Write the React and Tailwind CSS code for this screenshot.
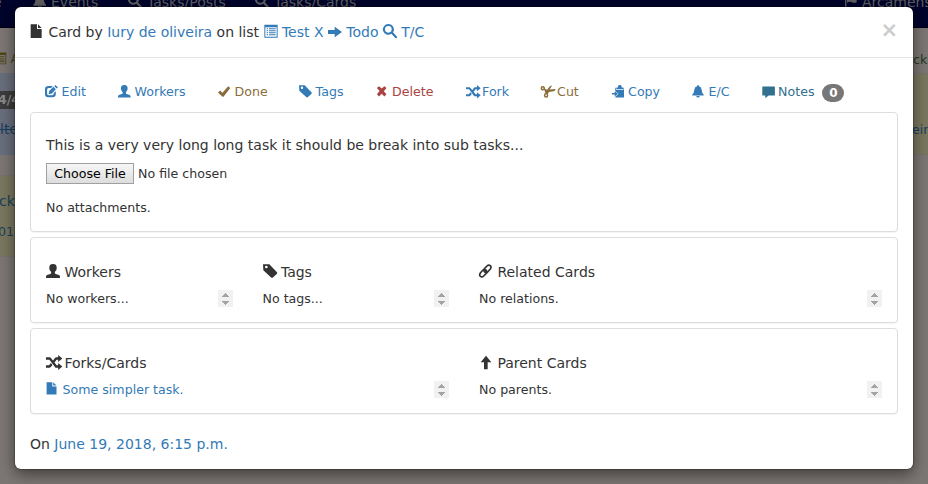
import React from "react";

// Solid glyphs on a 42-unit grid; each one scales with the text beside it.
const GLYPHS = {
  file: <path d="M2 1h19v14h14v27H2zM24 1l11 11H24z" />,
  list: (
    <path
      fillRule="evenodd"
      d="M1 2h40v39H1zM4 10v28h34V10zM8 13h4v3H8zm7 0h20v3H15zM8 19h4v3H8zm7 0h20v3H15zM8 25h4v3H8zm7 0h20v3H15zM8 31h4v3H8zm7 0h20v3H15z"
    />
  ),
  right: <path d="M0 18h20V8l22 16-22 16V30H0z" />,
  up: <path d="M15 43V22H5L21 2l16 20H26v21z" />,
  search: (
    <path
      fillRule="evenodd"
      d="M16 0a16 16 0 1 0 9 29l12 13q2 2 4 0t1-4L30 25A16 16 0 0 0 16 0m0 6a10 10 0 1 1 0 20 10 10 0 0 1 0-20"
    />
  ),
  edit: (
    <>
      <path d="M26 3H12Q0 3 0 14v16q0 11 11 11h14q11 0 11-11v-9l-7 6v2q0 5-5 5H12q-5 0-5-5V15q0-5 5-5h8z" />
      <path d="M12 31l2-11L28 6l8 8-13 14zM31 4l4-4 8 8-4 4z" />
    </>
  ),
  user: (
    <path d="M21 0c-8 0-12 5-11 12 0 4 1 8 5 11 1 3 1 5-2 7L3 33q-3 2-3 5v4h42v-4q0-3-3-5l-10-3c-3-2-3-4-2-7 4-3 5-7 5-11C33 5 29 0 21 0" />
  ),
  ok: <path d="M0 25l7-7 8 8L34 4l7 6-22 28q-2 3-5 0z" />,
  tag: (
    <path
      fillRule="evenodd"
      d="M0 1h19l23 24q1 2 0 4L29 41q-2 1-4 0L1 19zm10 4a4 4 0 1 0 0 8 4 4 0 0 0 0-8"
    />
  ),
  remove: <path d="M3 10l7-6 9 8 9-8 7 6-9 11 9 10-7 7-9-9-9 9-7-7 9-11z" />,
  random: (
    <g transform="translate(0 -2) scale(1.14)">
      <path d="M0 8h9q3 0 5 3l14 18h4v-6l11 9-11 9v-6h-7q-1 0-2-2L9 14H0zM0 29h8l5-6 4 5-5 6q-1 1-3 1H0zM18 17l6-8q1-1 3-1h5V2l11 9-11 9v-6h-4l-6 8z" />
    </g>
  ),
  scissors: (
    <>
      <g fill="none" stroke="currentColor" strokeWidth="5">
        <ellipse cx="6" cy="11" rx="5" ry="5" />
        <ellipse cx="17" cy="34" rx="5" ry="6" />
        <path d="M11 14l7 4v10" />
      </g>
      <path d="M12 14l8 3 6-9q4-6 11-6l-8 13 20-2q-2 7-7 8l-15 2-5 7-6-2-4-8z" />
    </>
  ),
  paste: (
    <>
      <path d="M15 8h5V5q0-5 6-5t6 5v3h5v6H15zM11 9v12l11 8-11 10v3h29V9h-2v8H14V9z" />
      <path d="M0 27h9v-6l11 8-11 9v-6H0z" />
    </>
  ),
  bell: (
    <path d="M20 0q3 0 3 4 8 2 9 11 1 13 7 17v3H1v-3q6-4 7-17 1-9 9-11 0-4 3-4M14 37h12q-1 5-6 5t-6-5" />
  ),
  comment: <path d="M2 5h39q2 0 2 2v26q0 2-2 2H22L11 44v-9H3q-2 0-2-2V7q0-2 1-2" />,
  link: (
    <g fill="none" stroke="currentColor" strokeWidth="5" strokeLinecap="round">
      <path d="M17 24q-5-6 0-11l7-7q5-5 10-1 4 4 0 10l-8 9q-4 3-7-1" />
      <path d="M21 18q5 6 0 11l-7 7q-5 5-10 1-4-4 0-10l8-9q4-3 7 1" />
    </g>
  ),
  flag: <path d="M3 0h4v42H3zM9 5q8-5 15 0 7 4 14 0v20q-7 4-14 0-7-4-15 1z" />,
};

function Icon({ name, className = "" }) {
  return (
    <svg viewBox="0 0 42 42" fill="currentColor" className={`mb-[2px] size-[1em] shrink-0 overflow-visible ${className}`}>
      {GLYPHS[name]}
    </svg>
  );
}

const ACTIONS = [
  ["edit", "Edit", "w-[73px] text-[#337ab7]"],
  ["user", "Workers", "w-[100px] text-[#337ab7]"],
  ["ok", "Done", "w-[81px] text-[#8a6d3b]"],
  ["tag", "Tags", "w-[76.5px] text-[#337ab7]"],
  ["remove", "Delete", "w-[90px] text-[#a94442]"],
  ["random", "Fork", "w-[75px] text-[#337ab7]"],
  ["scissors", "Cut", "w-[71px] text-[#8a6d3b]"],
  ["paste", "Copy", "w-[80.5px] text-[#337ab7]"],
  ["bell", "E/C", "w-[69.5px] text-[#337ab7]"],
  ["comment", "Notes", "text-[#31708f]"],
];

function Stepper() {
  return (
    <svg viewBox="0 0 15 17" className="h-[17px] w-[15px] shrink-0" shapeRendering="crispEdges">
      <path d="M0 0h15v17H0z" fill="#f1f1f1" />
      <path d="M3.5 7l4-4 4 4zM3.5 11l4 4 4-4z" fill="#a3a3a3" />
    </svg>
  );
}

function Section({ icon, title, className = "", children }) {
  return (
    <section className={`px-[15px] ${className}`}>
      <h2 className="flex h-5 items-center text-[14px]">
        <Icon name={icon} className="mr-[4.4px]" />
        {title}
      </h2>
      <div className="mt-[8px] flex h-[17px] items-center justify-between text-[12.6px]">
        <div className="flex items-center">{children}</div>
        <Stepper />
      </div>
    </section>
  );
}

function Panel({ className = "", children }) {
  return (
    <div className={`rounded-[4px] border border-[#ddd] bg-white shadow-[0_1px_1px_rgba(0,0,0,0.05)] ${className}`}>
      {children}
    </div>
  );
}

function Backdrop() {
  return (
    <div className="flex h-full flex-col bg-[#7c7674]">
      <nav className="flex h-[28px] shrink-0 items-start border-b border-[#000010] bg-[#00042b] text-[14px] text-[#5f5f5f]">
        <div className="-mt-[8px] flex h-5 w-full items-center">
          <span className="-ml-[7px] w-[40px]">e</span>
          <Icon name="bell" className="mr-[4px]" />
          <span className="w-[77px]">Events</span>
          <Icon name="search" className="mr-[5px]" />
          <span className="w-[108px]">Tasks/Posts</span>
          <Icon name="search" className="mr-[5px]" />
          <span>Tasks/Cards</span>
          <span className="ml-auto flex w-[84px] items-center gap-[4px] whitespace-nowrap">
            <Icon name="flag" />
            Arcamens
          </span>
        </div>
      </nav>
      <div className="flex flex-1 justify-between">
        <div className="w-[100px] text-[12.6px] text-[#1a3f5e]">
          <div className="flex h-[45px] items-center pt-[17px] text-[#4d4619]">
            <Icon name="list" className="-ml-[6px] mr-[4px]" />A
          </div>
          <div className="h-[82px] bg-[#686e7b] pt-[18px]">
            <div className="h-[18px] bg-[#3c3c3c] font-bold leading-[18px] text-[#8a8a8a]">
              <span className="-ml-[2px]">4/4</span>
            </div>
            <div className="mt-[10px] text-[14px] leading-5 line-through">lter</div>
          </div>
          <div className="mt-[20px] h-[82px] border-y border-[#77726b] bg-[#7a775f] pt-[15px]">
            <div className="-ml-px text-[14px] leading-5">ck</div>
            <div className="-ml-[10px] mt-[11px] leading-5">2018</div>
          </div>
        </div>
        <div className="w-[16px] overflow-hidden">
          <div className="h-[45px] pl-px pt-[22px] text-[12.6px] leading-5 text-[#1e3c1f]">ckl</div>
          <div className="h-[82px] border-y border-[#77726b] bg-[#7a775f] pt-[46px] text-[12.6px] leading-5 text-[#1a3f5e]">
            eir
          </div>
        </div>
      </div>
    </div>
  );
}

export default function App() {
  return (
    <div className="relative h-[484px] w-[928px] overflow-hidden font-['DejaVu_Sans',sans-serif] text-[14px] leading-5 text-[#333]">
      <Backdrop />
      <div
        role="dialog"
        className="absolute left-[15px] top-[7px] h-[462px] w-[898px] rounded-[6px] bg-white shadow-[0_0_0_1px_rgba(0,0,0,0.2),0_5px_15px_rgba(0,0,0,0.5)]"
      >
        <header className="flex h-[51px] items-center border-b border-[#e5e5e5] px-[15px]">
          <Icon name="file" className="mr-[4.4px]" />
          <span className="whitespace-pre">
            Card by <a className="text-[#337ab7]">Iury de oliveira</a> on list{" "}
          </span>
          <a className="flex items-center text-[#337ab7]">
            <Icon name="list" className="mr-[4.4px]" />
            Test X
            <Icon name="right" className="mx-[4.4px]" />
            Todo
            <Icon name="search" className="mx-[4.4px]" />
            T/C
          </a>
          <button className="mb-[3px] ml-auto text-[21px] font-bold leading-none text-[#ccc]">×</button>
        </header>
        <div className="px-[15px] pt-[24px]">
          <div className="flex h-5 items-center pl-[15px] text-[12.6px]">
            {ACTIONS.map(([icon, label, color]) => (
              <a key={label} className={`flex shrink-0 items-center ${color}`}>
                <Icon name={icon} className="mr-[4px]" />
                {label}
              </a>
            ))}
            <span className="ml-[8px] mt-[2px] h-[18px] w-[22px] rounded-[10px] bg-[#777] text-center text-[12px] font-bold leading-[18px] text-white">
              0
            </span>
          </div>
          <Panel className="mt-[10px] h-[120px] px-[15px] pt-[22px]">
            <p>This is a very very long long task it should be break into sub tasks...</p>
            <div className="mt-[8px] flex h-[21px] items-center text-[12.6px]">
              <button className="h-[21px] w-[88px] border border-[#a0a0a0] bg-linear-to-b from-[#f6f6f6] to-[#dddddd] text-[12.6px] leading-[19px] text-black">
                Choose File
              </button>
              <span className="ml-[4px]">No file chosen</span>
            </div>
            <p className="mt-[14px] text-[12.6px]">No attachments.</p>
          </Panel>
          <Panel className="mt-[5px] grid h-[86px] grid-cols-4 pt-[24px]">
            <Section icon="user" title="Workers">No workers...</Section>
            <Section icon="tag" title="Tags">No tags...</Section>
            <Section icon="link" title="Related Cards" className="col-span-2">No relations.</Section>
          </Panel>
          <Panel className="mt-[5px] grid h-[86px] grid-cols-2 pt-[24px]">
            <Section icon="random" title="Forks/Cards">
              <a className="flex items-center text-[#337ab7]">
                <Icon name="file" className="mr-[4px]" />
                Some simpler task.
              </a>
            </Section>
            <Section icon="up" title="Parent Cards">No parents.</Section>
          </Panel>
          <p className="mt-[20px]">
            On <a className="text-[#337ab7]">June 19, 2018, 6:15 p.m.</a>
          </p>
        </div>
      </div>
    </div>
  );
}
